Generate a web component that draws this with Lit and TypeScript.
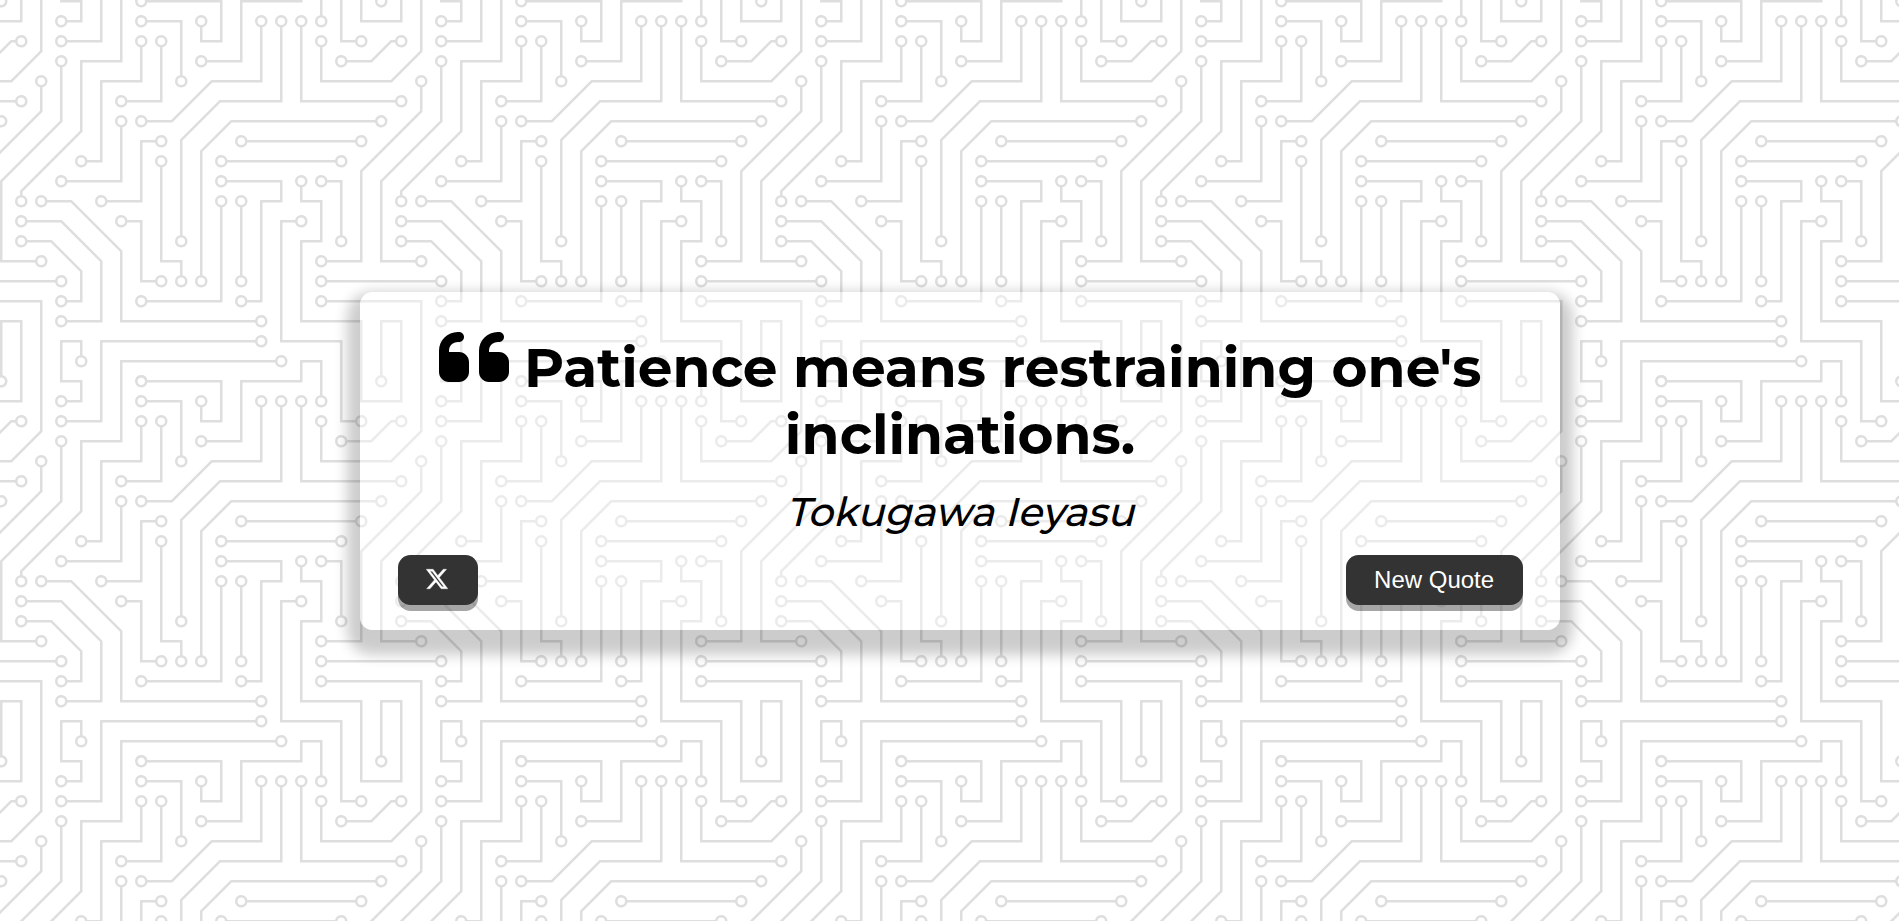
import { LitElement, html, css, svg, unsafeCSS } from "lit";
import { customElement, state } from "lit/decorators.js";

/* Circuit traces of one 304 x 304 tile; every trace ends in a disc of radius 5. */
const TRACES =
  "M44.1 224a5 5 0 1 1 0 2H0v-2h44.1zm160 48a5 5 0 1 1 0 2H82v-2h122.1zm57.8-46a5 5 0 1 1 0-2H304v2h-42.1zm0 16a5 5 0 1 1 0-2H304v2h-42.1zm6.2-114a5 5 0 1 1 0 2h-86.2a5 5 0 1 1 0-2h86.2zm-256-48a5 5 0 1 1 0 2H0v-2h12.1zm185.8 34a5 5 0 1 1 0-2h86.2a5 5 0 1 1 0 2h-86.2zM258 12.1a5 5 0 1 1-2 0V0h2v12.1zm-64 208a5 5 0 1 1-2 0v-54.2a5 5 0 1 1 2 0v54.2zm48-198.2V80h62v2h-64V21.9a5 5 0 1 1 2 0zm16 16V64h46v2h-48V37.9a5 5 0 1 1 2 0zm-128 96V208h16v12.1a5 5 0 1 1-2 0V210h-16v-76.1a5 5 0 1 1 2 0zm-5.9-21.9a5 5 0 1 1 0 2H114v48H85.9a5 5 0 1 1 0-2H112v-48h12.1zm-6.2 130a5 5 0 1 1 0-2H176v-74.1a5 5 0 1 1 2 0V242h-60.1zm-16-64a5 5 0 1 1 0-2H114v48h10.1a5 5 0 1 1 0 2H112v-48h-10.1zM66 284.1a5 5 0 1 1-2 0V274H50v30h-2v-32h18v12.1zM236.1 176a5 5 0 1 1 0 2H226v94h48v32h-2v-30h-48v-98h12.1zm25.8-30a5 5 0 1 1 0-2H274v44.1a5 5 0 1 1-2 0V146h-10.1zm-64 96a5 5 0 1 1 0-2H208v-80h16v-14h-42.1a5 5 0 1 1 0-2H226v18h-16v80h-12.1zm86.2-210a5 5 0 1 1 0 2H272V0h2v32h10.1zM98 101.9V146H53.9a5 5 0 1 1 0-2H96v-42.1a5 5 0 1 1 2 0zM53.9 34a5 5 0 1 1 0-2H80V0h2v34H53.9zm60.1 3.9V66H82v64H69.9a5 5 0 1 1 0-2H80V64h32V37.9a5 5 0 1 1 2 0zM101.9 82a5 5 0 1 1 0-2H128V37.9a5 5 0 1 1 2 0V82h-28.1zm16-64a5 5 0 1 1 0-2H146v44.1a5 5 0 1 1-2 0V18h-26.1zm102.2 270a5 5 0 1 1 0 2H98v14h-2v-16h124.1zM242 149.9V160h16v34h-16v62h48v48h-2v-46h-48v-66h16v-30h-16v-12.1a5 5 0 1 1 2 0zM53.9 18a5 5 0 1 1 0-2H64V2H48V0h18v18H53.9zm112 32a5 5 0 1 1 0-2H192V0h50v2h-48v48h-28.1zm-48-48a5 5 0 0 1-9.8-2h2.07a3 3 0 1 0 5.66 0H178v34h-18V21.9a5 5 0 1 1 2 0V32h14V2h-58.1zm0 96a5 5 0 1 1 0-2H137l32-32h39V21.9a5 5 0 1 1 2 0V66h-40.17l-32 32H117.9zm28.1 90.1a5 5 0 1 1-2 0v-76.51L175.59 80H224V21.9a5 5 0 1 1 2 0V82h-49.59L146 112.41v75.69zm16 32a5 5 0 1 1-2 0v-99.51L184.59 96H300.1a5 5 0 0 1 3.9-3.9v2.07a3 3 0 0 0 0 5.66v2.07a5 5 0 0 1-3.9-3.9H185.41L162 121.41v98.69zm-144-64a5 5 0 1 1-2 0v-3.51l48-48V48h32V0h2v50H66v55.41l-48 48v2.69zM50 53.9v43.51l-48 48V208h26.1a5 5 0 1 1 0 2H0v-65.41l48-48V53.9a5 5 0 1 1 2 0zm-16 16V89.41l-34 34v-2.82l32-32V69.9a5 5 0 1 1 2 0zM12.1 32a5 5 0 1 1 0 2H9.41L0 43.41V40.6L8.59 32h3.51zm265.8 18a5 5 0 1 1 0-2h18.69l7.41-7.41v2.82L297.41 50H277.9zm-16 160a5 5 0 1 1 0-2H288v-71.41l16-16v2.82l-14 14V210h-28.1zm-208 32a5 5 0 1 1 0-2H64v-22.59L40.59 194H21.9a5 5 0 1 1 0-2H41.41L66 216.59V242H53.9zm150.2 14a5 5 0 1 1 0 2H96v-56.6L56.6 162H37.9a5 5 0 1 1 0-2h19.5L98 200.6V256h106.1zm-150.2 2a5 5 0 1 1 0-2H80v-46.59L48.59 178H21.9a5 5 0 1 1 0-2H49.41L82 208.59V258H53.9zM34 39.8v1.61L9.41 66H0v-2h8.59L32 40.59V0h2v39.8zM2 300.1a5 5 0 0 1 3.9 3.9H3.83A3 3 0 0 0 0 302.17V256h18v48h-2v-46H2v42.1zM34 241v63h-2v-62H0v-2h34v1zM17 18H0v-2h16V0h2v18h-1zm273-2h14v2h-16V0h2v16zm-32 273v15h-2v-14h-14v14h-2v-16h18v1zM0 92.1A5.02 5.02 0 0 1 6 97a5 5 0 0 1-6 4.9v-2.07a3 3 0 1 0 0-5.66V92.1zM80 272h2v32h-2v-32zm37.9 32h-2.07a3 3 0 0 0-5.66 0h-2.07a5 5 0 0 1 9.8 0zM5.9 0A5.02 5.02 0 0 1 0 5.9V3.83A3 3 0 0 0 3.83 0H5.9zm294.2 0h2.07A3 3 0 0 0 304 3.83V5.9a5 5 0 0 1-3.9-5.9zm3.9 300.1v2.07a3 3 0 0 0-1.83 1.83h-2.07a5 5 0 0 1 3.9-3.9z";

/* Centres of the pads, which are hollow. */
const PADS: [number, number][] = [
  [49, 225], [209, 273], [257, 225], [257, 241], [273, 129], [177, 129], [17, 81],
  [193, 113], [289, 113], [257, 17], [193, 225], [193, 161], [241, 17], [257, 33],
  [129, 129], [145, 225], [129, 113], [81, 161], [113, 241], [177, 161], [97, 177],
  [129, 225], [65, 289], [241, 177], [257, 145], [273, 193], [193, 241], [177, 145],
  [289, 33], [97, 97], [49, 145], [49, 33], [113, 33], [65, 129], [97, 81], [129, 33],
  [113, 17], [145, 65], [225, 289], [241, 145], [49, 17], [161, 49], [161, 17],
  [113, 97], [209, 17], [145, 193], [225, 17], [161, 225], [17, 161], [49, 49],
  [33, 209], [33, 65], [17, 33], [273, 49], [257, 209], [49, 241], [17, 193],
  [209, 257], [33, 161], [49, 257], [17, 177],
];

const holes = PADS.map(([x, y]) => `M${x - 3} ${y}a3 3 0 1 0 6 0a3 3 0 1 0-6 0z`).join("");
const tile = encodeURIComponent(
  `<svg xmlns="http://www.w3.org/2000/svg" width="304" height="304" viewBox="0 0 304 304"><path fill="#dedede" d="${TRACES}"/><path fill="#fff" d="${holes}"/></svg>`
);

const quoteIcon = svg`<path d="M0 216C0 149.7 53.7 96 120 96h8c17.7 0 32 14.3 32 32s-14.3 32-32 32h-8c-30.9 0-56 25.1-56 56v8h64c35.3 0 64 28.7 64 64v64c0 35.3-28.7 64-64 64H64c-35.3 0-64-28.7-64-64V216zm256 0c0-66.3 53.7-120 120-120h8c17.7 0 32 14.3 32 32s-14.3 32-32 32h-8c-30.9 0-56 25.1-56 56v8h64c35.3 0 64 28.7 64 64v64c0 35.3-28.7 64-64 64h-64c-35.3 0-64-28.7-64-64V216z"/>`;
const xIcon = svg`<path d="M389.2 48h70.6L305.6 224.2 487 464H345L233.7 318.6 106.5 464H35.8L200.7 275.5 26.8 48H172.4L272.9 180.9 389.2 48zM364.4 421.8h39.1L151.1 88h-42L364.4 421.8z"/>`;

@customElement("app-root")
export class AppRoot extends LitElement {
  static styles = css`
    :host {
      display: flex;
      align-items: center;
      justify-content: center;
      box-sizing: border-box;
      height: 100vh;
      padding: 1px 0 0 21px;
      overflow: hidden;
      color: #000;
      background: #fff url("data:image/svg+xml,${unsafeCSS(tile)}") 0 0 / 380px 380px;
      font-family: Montserrat, Inter, sans-serif;
    }
    .card {
      display: flex;
      flex-direction: column;
      box-sizing: border-box;
      width: 1200px;
      height: 338px;
      padding: 25px 37.5px;
      border-radius: 12.5px;
      background: rgba(255, 255, 255, 0.4);
      box-shadow: 0 12.5px 12.5px 12.5px rgba(0, 0, 0, 0.2);
    }
    .quote {
      margin: 0;
      padding-top: 17px;
      font-size: 55px;
      font-weight: 700;
      line-height: 67px;
    }
    .line {
      display: flex;
      justify-content: center;
      height: 67px;
      white-space: nowrap;
    }
    .mark {
      width: 70px;
      height: 80px;
      margin: -17px 15.3px 0 0;
      flex: none;
    }
    .author {
      align-self: center;
      margin-top: 20px;
      font-size: 40px;
      font-weight: 500;
      line-height: 48px;
      transform: skewX(-14deg);
      transform-origin: 50% 38px;
    }
    .actions {
      display: flex;
      justify-content: space-between;
      margin-top: auto;
    }
    button {
      display: flex;
      align-items: center;
      justify-content: center;
      height: 50px;
      padding: 0 28.4px;
      border: 0;
      border-radius: 12.5px;
      color: #fff;
      background: #333;
      box-shadow: 0 6px rgba(0, 0, 0, 0.35);
      font: 24px/28px "Liberation Sans", Arial, sans-serif;
    }
    .share { padding: 0 28px; }
    .x {
      width: 24px;
      height: 24px;
      margin: -2px 1px 0 -1px;
      fill: #fff;
      stroke: #fff;
      stroke-width: 8px;
    }
  `;

  @state() private lines = ["Patience means restraining one's", "inclinations."];
  @state() private author = "Tokugawa Ieyasu";

  render() {
    return html`
      <main class="card">
        <h1 class="quote">
          <div class="line">
            <svg class="mark" viewBox="0 0 448 512">${quoteIcon}</svg>
            <span>${this.lines[0]}</span>
          </div>
          <div class="line"><span>${this.lines[1]}</span></div>
        </h1>
        <div class="author">${this.author}</div>
        <div class="actions">
          <button class="share" aria-label="Share">
            <svg class="x" viewBox="0 0 512 512">${xIcon}</svg>
          </button>
          <button>New Quote</button>
        </div>
      </main>
    `;
  }
}
